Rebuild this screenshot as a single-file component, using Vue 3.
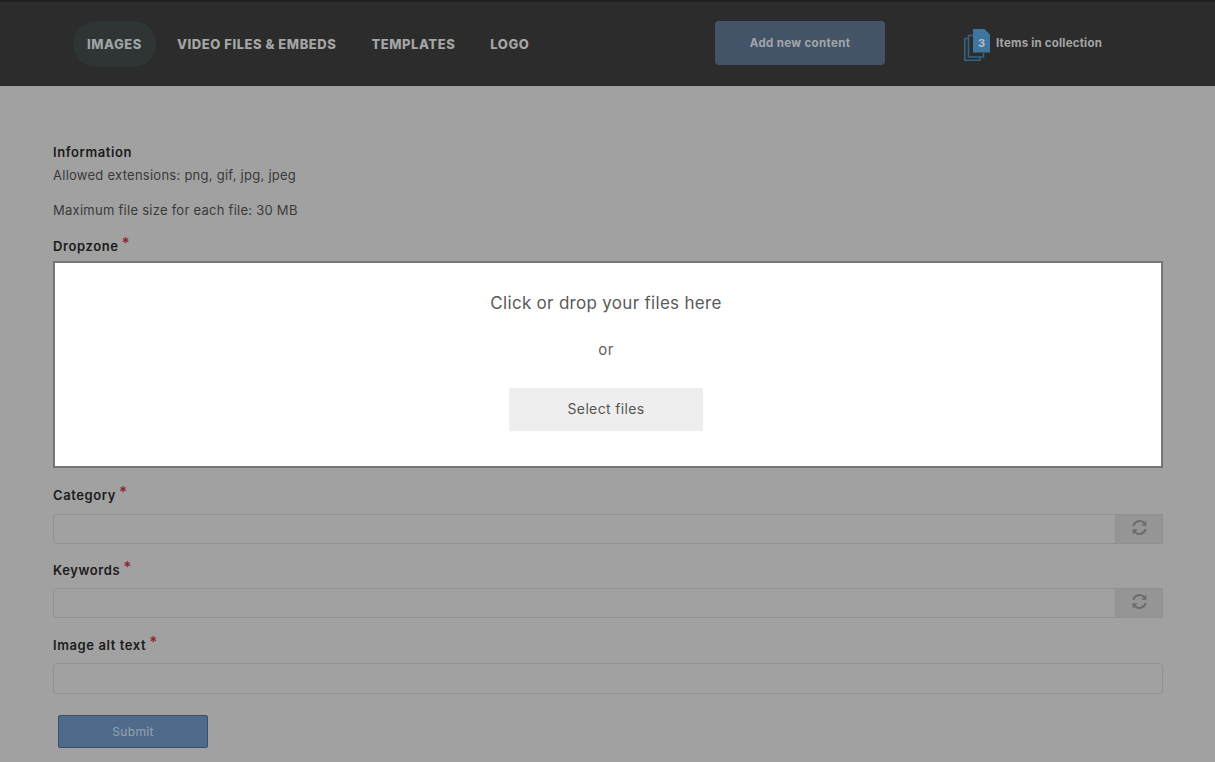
<script setup>
const navItems = [
  { label: 'IMAGES', active: true },
  { label: 'VIDEO FILES & EMBEDS', active: false },
  { label: 'TEMPLATES', active: false },
  { label: 'LOGO', active: false },
]
</script>

<template>
  <div class="page">
    <header class="header">
      <nav class="nav">
        <a v-for="item in navItems" :key="item.label" class="nav-item" :class="{ active: item.active }">{{ item.label }}</a>
      </nav>
      <button class="add-btn">Add new content</button>
      <div class="collection">
        <span class="stack">
          <svg width="26" height="33" viewBox="0 0 26 33">
            <path d="M4.500 9.500H0.800V31.200H16V28" fill="none" stroke="#336583" stroke-width="1.600"/>
            <path d="M9 6.500H4.500V28H19.500V24" fill="none" stroke="#336583" stroke-width="1.600"/>
            <path d="M9 0H20.500L26 5.500V23.500H9z" fill="#3f769f"/>
          </svg>
          <b class="stack-count">3</b>
        </span>
        <span class="collection-label">Items in collection</span>
      </div>
    </header>

    <main class="main">
      <h4 class="label info-title">Information</h4>
      <p class="info first">Allowed extensions: png, gif, jpg, jpeg</p>
      <p class="info second">Maximum file size for each file: 30 MB</p>

      <label class="label field-label">Dropzone<sup class="req">*</sup></label>
      <section class="dropzone">
        <p class="drop-title">Click or drop your files here</p>
        <p class="drop-or">or</p>
        <button class="select-btn">Select files</button>
      </section>

      <label class="label field-label category">Category<sup class="req">*</sup></label>
      <div class="input-group">
        <div class="input"></div>
        <span class="addon">
          <svg width="17" height="17" viewBox="0 0 16 16" fill="none" stroke="#6d6d6d" stroke-width="1.900">
            <path d="M2.200 6.600A6 6 0 0 1 12.600 4L14 5.600"/>
            <path d="M13.800 9.400A6 6 0 0 1 3.400 12L2 10.400"/>
            <path d="M14.400 1.500v4.800H9.800z" fill="#6d6d6d" stroke="none"/>
            <path d="M1.600 14.500V9.700h4.600z" fill="#6d6d6d" stroke="none"/>
          </svg>
        </span>
      </div>

      <label class="label field-label keywords">Keywords<sup class="req">*</sup></label>
      <div class="input-group second-group">
        <div class="input"></div>
        <span class="addon">
          <svg width="17" height="17" viewBox="0 0 16 16" fill="none" stroke="#6d6d6d" stroke-width="1.900">
            <path d="M2.200 6.600A6 6 0 0 1 12.600 4L14 5.600"/>
            <path d="M13.800 9.400A6 6 0 0 1 3.400 12L2 10.400"/>
            <path d="M14.400 1.500v4.800H9.800z" fill="#6d6d6d" stroke="none"/>
            <path d="M1.600 14.500V9.700h4.600z" fill="#6d6d6d" stroke="none"/>
          </svg>
        </span>
      </div>

      <label class="label field-label alt">Image alt text<sup class="req">*</sup></label>
      <div class="input alone"></div>

      <button class="submit">Submit</button>
    </main>
  </div>
</template>

<style scoped>
.page {
  height: 762px;
  overflow: hidden;
  background: #a1a1a1;
  font-family: Inter, "Open Sans", sans-serif;
  color: #333;
}
.header {
  height: 84px;
  border-top: 2px solid #1f1f1f;
  background: #2c2c2c;
  display: flex;
  align-items: center;
  padding-left: 73px;
}
.nav {
  display: flex;
  align-items: center;
  width: 642px;
}
.nav-item {
  height: 46px;
  padding: 0 14px;
  margin-right: 7px;
  border-radius: 23px;
  display: flex;
  align-items: center;
  font-size: 13px;
  font-weight: 800;
  color: #a5a5a5;
  white-space: nowrap;
  letter-spacing: 0.55px;
}
.nav-item.active {
  background: #2f3535;
  color: #9ea4a4;
}
.add-btn {
  width: 170px;
  height: 44px;
  margin-top: -3px;
  border: 0;
  border-radius: 4px;
  background: #435469;
  color: #a3a6a9;
  font-family: inherit;
  font-size: 11.500px;
  font-weight: 700;
  letter-spacing: 0.35px;
  padding: 0;
}
.collection {
  display: flex;
  align-items: center;
  margin-left: 79px;
  margin-top: -2px;
}
.stack {
  position: relative;
  width: 26px;
  height: 33px;
  margin: 5px 6px 0 0;
}
.stack svg { display: block; }
.stack-count {
  position: absolute;
  left: 9px;
  right: 0;
  top: 8px;
  text-align: center;
  font-size: 11px;
  line-height: 12px;
  font-weight: 700;
  color: #b4bdc5;
}
.collection-label {
  font-size: 11.500px;
  font-weight: 700;
  color: #a5a5a5;
  letter-spacing: 0.2px;
}
.main {
  padding: 58px 52px 0 53px;
  display: flex;
  flex-direction: column;
  align-items: stretch;
}
.label {
  display: block;
  margin: 0;
  font-size: 13px;
  line-height: 16px;
  font-weight: 600;
  color: #1b1b1b;
  letter-spacing: 0.6px;
}
.info {
  margin: 0;
  font-size: 13px;
  line-height: 16px;
  color: #3a3a3a;
  letter-spacing: 0.26px;
}
.info.first { margin-top: 7px; }
.info.second { margin-top: 19px; }
.field-label { position: relative; }
.req {
  color: #8e2436;
  font-size: 15px;
  line-height: 0;
  margin-left: 3px;
  vertical-align: 3px;
  letter-spacing: 0;
}
.info.second + .field-label { margin-top: 20px; }
.dropzone {
  margin-top: 7px;
  height: 207px;
  box-sizing: border-box;
  border: 2px solid #757575;
  background: #fff;
  display: flex;
  flex-direction: column;
  align-items: center;
  padding-right: 4px;
}
.drop-title {
  margin: 29px 0 0;
  font-size: 17px;
  line-height: 22px;
  color: #5a5a5a;
  letter-spacing: 0.3px;
}
.drop-or {
  margin: 26px 0 0;
  font-size: 15px;
  line-height: 20px;
  color: #5f5f5f;
  letter-spacing: 0.4px;
}
.select-btn {
  margin-top: 28px;
  width: 194px;
  height: 43px;
  border: 0;
  border-radius: 2px;
  background: #eeeeee;
  color: #555;
  font-family: inherit;
  font-size: 14px;
  letter-spacing: 0.35px;
  padding: 0 0 2px;
}
.category { margin-top: 19px; }
.keywords { margin-top: 18px; }
.alt { margin-top: 19px; }
.field-label + .input-group { margin-top: 11px; }
.field-label + .second-group { margin-top: 10px; }
.input-group {
  display: flex;
  height: 30px;
}
.input {
  flex: 1;
  box-sizing: border-box;
  border: 1px solid #919191;
  border-radius: 4px 0 0 4px;
  background: #a1a1a1;
}
.input.alone {
  flex: none;
  height: 31px;
  margin-top: 10px;
  border-radius: 4px;
}
.addon {
  width: 47px;
  box-sizing: border-box;
  border: 1px solid #919191;
  border-left: 0;
  background: #959595;
  display: flex;
  align-items: center;
  justify-content: center;
  padding-bottom: 3px;
}
.submit {
  align-self: flex-start;
  margin: 21px 0 0 5px;
  width: 150px;
  height: 33px;
  border: 1px solid #3c4f68;
  border-radius: 2px;
  background: #4f6b8c;
  color: #98a2ad;
  font-family: inherit;
  font-size: 12px;
  letter-spacing: 0.3px;
  padding: 0;
}
</style>
